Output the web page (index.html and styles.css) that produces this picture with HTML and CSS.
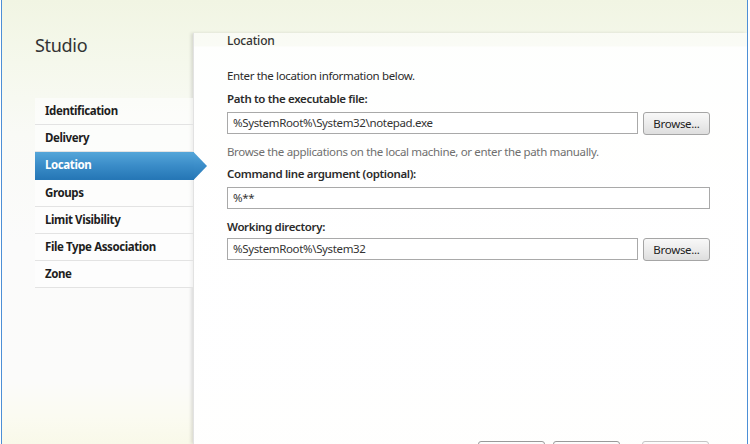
FILE: index.html
```html
<!DOCTYPE html>
<html lang="en">
<head>
<meta charset="utf-8">
<title>Studio - Location</title>
<link rel="stylesheet" href="styles.css">
</head>
<body>
<div class="window">
  <aside class="sidebar">
    <h1 class="brand">Studio</h1>
    <ul class="steps">
      <li class="step">Identification</li>
      <li class="step">Delivery</li>
      <li class="step step-active">Location</li>
      <li class="step">Groups</li>
      <li class="step">Limit Visibility</li>
      <li class="step">File Type Association</li>
      <li class="step">Zone</li>
    </ul>
  </aside>
  <main class="panel">
    <h2 class="panel-title">Location</h2>
    <div class="panel-body">
      <p class="intro">Enter the location information below.</p>
      <label class="field-label lbl-path">Path to the executable file:</label>
      <div class="field-row">
        <div class="input input-short">%SystemRoot%\System32\notepad.exe</div>
        <button class="btn">Browse...</button>
      </div>
      <p class="hint">Browse the applications on the local machine, or enter the path manually.</p>
      <label class="field-label lbl-args">Command line argument (optional):</label>
      <div class="field-row">
        <div class="input input-full">%**</div>
      </div>
      <label class="field-label lbl-dir">Working directory:</label>
      <div class="field-row">
        <div class="input input-short">%SystemRoot%\System32</div>
        <button class="btn">Browse...</button>
      </div>
    </div>
    <div class="footer">
      <button class="btn btn-footer" aria-label="Back"></button>
      <button class="btn btn-footer" aria-label="Next"></button>
      <button class="btn btn-footer btn-disabled" aria-label="Cancel"></button>
    </div>
  </main>
</div>
</body>
</html>
```

FILE: styles.css
```css
html, body {
  margin: 0;
  padding: 0;
  width: 750px;
  height: 444px;
  overflow: hidden;
  background: #ffffff;
}

body {
  font-family: "Noto Sans", "Open Sans", "DejaVu Sans", sans-serif;
  font-size: 11.5px;
  letter-spacing: -0.35px;
  color: #2b2b2b;
}

.window {
  margin-left: 1px;
  width: 745px;
  height: 444px;
  border-left: 1px solid #4d8fd6;
  border-right: 1px solid #4d8fd6;
  display: flex;
  background: linear-gradient(to bottom, #f1f5e3 0%, #f5f8ec 14%, #f9faf6 30%, #fbfbfb 55%, #fbfbfa 86%, #fbfbf1 94%, #f9f9e9 100%);
  overflow: hidden;
}

.sidebar {
  width: 191px;
  flex: none;
  padding-left: 33px;
  padding-top: 33px;
  box-sizing: border-box;
  position: relative;
  z-index: 2;
}

.brand {
  margin: 0;
  font-size: 18px;
  line-height: 24px;
  font-weight: 400;
  color: #333333;
  letter-spacing: -0.3px;
}

.steps {
  list-style: none;
  margin: 41px 0 0 0;
  padding: 0;
}

.step {
  height: 26.2px;
  line-height: 26px;
  padding-left: 10px;
  border-bottom: 1px solid #e3e3e3;
  font-weight: 700;
  font-size: 11.5px;
  color: #1e1e1e;
  letter-spacing: -0.4px;
  position: relative;
  background: rgba(255, 255, 255, 0.55);
}

.step-active {
  color: #ffffff;
  background: linear-gradient(to bottom, #55a6d9 0%, #3a8cc8 50%, #2677b6 100%);
  border-bottom-color: #2677b6;
  margin-right: -1px;
}

.step-active::after {
  content: "";
  position: absolute;
  top: 0;
  right: -13px;
  width: 13px;
  height: 27.2px;
  background: linear-gradient(to bottom, #55a6d9 0%, #3a8cc8 50%, #2677b6 100%);
  clip-path: polygon(0 0, 0 100%, 100% 50%);
}

.panel {
  flex: 1;
  margin-top: 33px;
  display: flex;
  flex-direction: column;
  background: linear-gradient(to bottom, rgba(255,255,255,0.55) 0px, rgba(255,255,255,0.55) 13px, rgba(255,255,255,0.93) 14px, rgba(255,255,255,0.93) 100%);
  box-shadow: -2px 0 3px rgba(0, 0, 0, 0.12), inset 1px 0 0 #e2e2e2;
  padding-left: 34px;
  position: relative;
  z-index: 1;
}

.panel-title {
  margin: 0;
  font-size: 12px;
  line-height: 16px;
  font-weight: 500;
  color: #333333;
  letter-spacing: -0.2px;
}

.panel-body {
  width: 484px;
  margin-top: 19px;
}

.intro {
  margin: 0;
  line-height: 16px;
}

.field-label {
  display: block;
  line-height: 16px;
  font-weight: 600;
  color: #2b2b2b;
}

.lbl-path { margin-top: 7px; }
.lbl-args { margin-top: 6px; }
.lbl-dir { margin-top: 10px; }

.field-row {
  display: flex;
  gap: 5px;
  margin-top: 5px;
}

.lbl-dir + .field-row { margin-top: 3px; }

.input {
  height: 22px;
  box-sizing: border-box;
  border: 1px solid #a9a9a9;
  background: #ffffff;
  padding-left: 5px;
  line-height: 20px;
  color: #333333;
}

.input-short { width: 411px; }
.input-full { width: 483px; }

.btn {
  width: 67px;
  height: 23px;
  box-sizing: border-box;
  border: 1px solid #a5a5a5;
  border-radius: 3px;
  background: linear-gradient(to bottom, #f8f8f8 0%, #ececec 50%, #dedede 100%);
  font-family: inherit;
  font-size: 11.5px;
  letter-spacing: -0.3px;
  color: #222222;
  padding: 0;
  margin: 0;
}

.hint {
  margin: 9px 0 0 0;
  line-height: 16px;
  color: #6f6f6f;
}

.footer {
  margin-top: auto;
  height: 3px;
  display: flex;
  margin-left: 251px;
  gap: 8px;
}

.btn-footer {
  flex: none;
  width: 67px;
  background: linear-gradient(to bottom, #fdfdfd 0%, #f0f0f0 100%);
  border-color: #9a9a9a;
}

.btn-footer.btn-disabled {
  margin-left: 14px;
  border-color: #c4c4c4;
}
```
